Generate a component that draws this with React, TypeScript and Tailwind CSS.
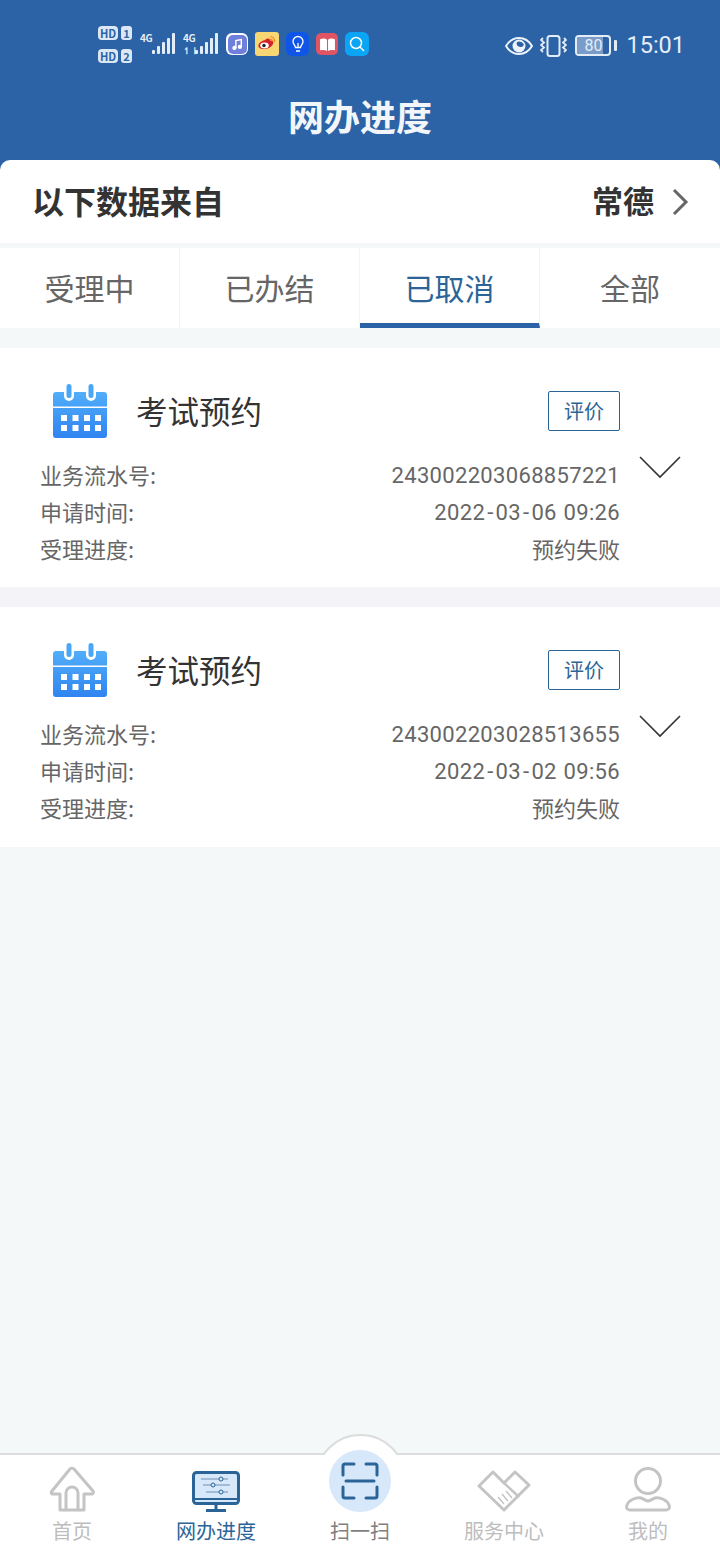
const font = { fontFamily: '"Noto Sans CJK SC", Roboto, sans-serif' }

const tabs = ['受理中', '已办结', '已取消', '全部']

const orders = [
  { no: '243002203068857221', time: '2022-03-06 09:26' },
  { no: '243002203028513655', time: '2022-03-02 09:56' },
]

function Bars() {
  return (
    <div className="mb-[2px] flex items-end gap-[2px]">
      {[4, 8, 12, 16, 21].map(h => (
        <div key={h} className="w-[3px] rounded-[1px] bg-[#e4edf7]" style={{ height: h }} />
      ))}
    </div>
  )
}

function HdBadge({ n }: { n: string }) {
  return (
    <div className="flex items-center gap-[3px]">
      <div className="flex h-[14px] w-[20px] items-center justify-center rounded-[4px] bg-[#dce7f4] text-[11px] leading-none font-bold text-[#2b63a6]">
        HD
      </div>
      <div className="flex h-[14px] w-[11px] items-center justify-center rounded-[3px] bg-[#dce7f4] text-[11px] leading-none font-bold text-[#2b63a6]">
        {n}
      </div>
    </div>
  )
}

function Signal({ arrows }: { arrows?: boolean }) {
  return (
    <div className="flex h-[24px] items-end">
      <div className="flex h-full w-[12px] flex-col justify-between text-[10px] leading-[11px] font-bold tracking-[-0.5px] text-[#e4edf7]">
        <span>4G</span>
        {arrows ? <span className="text-[9px] leading-[10px]">↿⇂</span> : <span />}
      </div>
      <Bars />
    </div>
  )
}

function AppIcons() {
  return (
    <div className="flex items-center gap-[7px]">
      <div className="flex h-[22px] w-[22px] items-center justify-center rounded-[6px] bg-white">
        <div className="flex h-[19px] w-[19px] items-center justify-center rounded-[5px] bg-[#6f80dc]">
          <svg width="13" height="13" viewBox="0 0 12 12" fill="none" stroke="#fff" strokeWidth="1.3">
            <path d="M4.5 9.2V2.4l5-1v6.6" />
            <circle cx="3.2" cy="9.2" r="1.3" fill="#fff" />
            <circle cx="8.2" cy="8.2" r="1.3" fill="#fff" />
          </svg>
        </div>
      </div>
      <div className="flex h-[24px] w-[24px] items-center justify-center rounded-[3px] bg-[#f7d774]">
        <svg width="22" height="20" viewBox="0 0 22 20" fill="none">
          <path d="M9 6c3-2.500 5-1.500 5 .5 3-.5 4 1.500 3 3.500-1.500 3-5 5-9 5S2 13.500 2.500 11 6 7 9 6z" fill="#d6232b" />
          <ellipse cx="8.500" cy="11.500" rx="4.300" ry="3" fill="#fff" />
          <circle cx="8" cy="11.500" r="1.700" fill="#222" />
          <path d="M14 2.500c3 0 5 2.500 4.500 5.500M14 5c1.500 0 2.500 1 2.200 2.500" stroke="#ec8a1e" strokeWidth="1.200" />
        </svg>
      </div>
      <div className="flex h-[24px] w-[23px] items-center justify-center rounded-[6px] bg-[#0f56e8]">
        <svg width="16" height="18" viewBox="0 0 16 18" fill="none" stroke="#fff" strokeWidth="1.300">
          <path d="M5.500 12.500c0-2-2.500-3-2.500-6a5 5 0 0 1 10 0c0 3-2.500 4-2.500 6z" />
          <path d="M6 16h4M8 12.500V8" />
        </svg>
      </div>
      <div className="flex h-[22px] w-[22px] items-center justify-center rounded-[5px] bg-[#df5564]">
        <svg width="17" height="15" viewBox="0 0 16 14" fill="#fff">
          <path d="M1 2c2.500-1 5-1 6.500.5V13C6 12 3.500 12 1 12.500zM15 2c-2.500-1-5-1-6.500.5V13c1.500-1 4-1 6.500-.5z" />
        </svg>
      </div>
      <div className="flex h-[24px] w-[24px] items-center justify-center rounded-[6px] bg-[#0aa5f5]">
        <svg width="18" height="18" viewBox="0 0 18 18" fill="none" stroke="#fff" strokeWidth="1.500">
          <circle cx="8" cy="8" r="5.500" />
          <path d="M12 12l4 4" />
        </svg>
      </div>
    </div>
  )
}

function StatusBar() {
  return (
    <div className="flex h-[91px] items-start pt-[24px] pr-[35px] pl-[98px]">
      <div className="flex flex-col gap-[9px] pt-[2px]">
        <HdBadge n="1" />
        <HdBadge n="2" />
      </div>
      <div className="mt-[8px] ml-[8px] flex items-center gap-[8px]">
        <Signal />
        <Signal arrows />
        <AppIcons />
      </div>
      <div className="ml-auto flex items-center pt-[10px] text-[#e4edf7]">
        <svg width="28" height="20" viewBox="0 0 28 20" fill="none">
          <path d="M1 10c3-5 8-8 13-8s10 3 13 8c-3 5-8 8-13 8S4 15 1 10z" fill="#2b63a6" stroke="#eef3fa" strokeWidth="2" />
          <circle cx="14" cy="10" r="6.500" fill="#eef3fa" />
          <path d="M12 6a6 6 0 0 1 7 2.500 3 3 0 0 1-7-2.500z" fill="#2b63a6" />
        </svg>
        <svg className="ml-[7px]" width="27" height="22" viewBox="0 0 27 22" fill="none" stroke="#e4edf7" strokeWidth="2">
          <rect x="7.500" y="1" width="12" height="20" rx="2.500" />
          <path d="M3 3l-2 2 3 2.500-3 2.500 3 2.500-3 2.500 2 2M24 3l2 2-3 2.500 3 2.500-3 2.500 3 2.500-2 2" strokeWidth="1.800" />
        </svg>
        <div className="ml-[8px] flex items-center gap-[3px]">
          <div className="relative flex h-[21px] w-[36px] items-center justify-center overflow-hidden rounded-[4px] border-2 border-[#e4edf7] bg-[#2b63a6] text-[16px] leading-none" style={{ fontFamily: 'Roboto, sans-serif' }}>
            <div className="absolute inset-y-0 left-0 w-[80%] bg-[#7a9cc8]" />
            <span className="relative">80</span>
          </div>
          <div className="h-[11px] w-[3px] rounded-[1px] bg-[#e4edf7]" />
        </div>
        <span className="ml-[9px] text-[23.500px] leading-none" style={{ fontFamily: 'Roboto, sans-serif' }}>15:01</span>
      </div>
    </div>
  )
}

function CalendarIcon() {
  return (
    <svg width="54" height="54" viewBox="0 0 54 54" fill="none">
      <defs>
        <linearGradient id="cal" x1="0" y1="0" x2="0" y2="1">
          <stop offset="0" stopColor="#52aefa" />
          <stop offset="1" stopColor="#2f84f0" />
        </linearGradient>
      </defs>
      <path d="M3 8h8v4a5 5 0 0 0 10 0V8h12v4a5 5 0 0 0 10 0V8h8a3 3 0 0 1 3 3v40a3 3 0 0 1-3 3H3a3 3 0 0 1-3-3V11a3 3 0 0 1 3-3z" fill="url(#cal)" />
      <rect x="13.500" y="0" width="5" height="14" rx="2.500" fill="#4aa7f8" />
      <rect x="35.500" y="0" width="5" height="14" rx="2.500" fill="#4aa7f8" />
      <rect x="0" y="22.500" width="54" height="1.500" fill="#fff" />
      {[8, 19.5, 31, 42].flatMap(x =>
        [31, 41].map(y => <rect key={`${x}-${y}`} x={x} y={y} width="6" height="6" fill="#fff" />),
      )}
    </svg>
  )
}

// The reference font draws wider hyphens than Roboto, so they get side margins
function Stamp({ text }: { text: string }) {
  const parts = text.split('-')
  return (
    <span className="translate-y-[1px] tracking-[0.33px] [word-spacing:1px]" style={{ fontFamily: 'Roboto, sans-serif' }}>
      {parts.map((p, i) => (
        <span key={i}>
          {i > 0 && <span className="mx-[2px]">-</span>}
          {p}
        </span>
      ))}
    </span>
  )
}

function OrderCard({ no, time }: { no: string; time: string }) {
  return (
    <div className="flex h-[239px] bg-white pl-[40px] last:h-[240px]">
      <div className="w-[580px] shrink-0">
        <div className="flex h-[108px] items-center pt-[18px]">
          <div className="ml-[13px]">
            <CalendarIcon />
          </div>
          <span className="ml-[29px] text-[31.500px] leading-none text-[#333]">考试预约</span>
          <div className="ml-auto flex h-[40px] w-[72px] items-center justify-center rounded-[2px] border border-[#2b6597] text-[20px] leading-none text-[#2b6597]">
            评价
          </div>
        </div>
        <div className="text-[22px] leading-[37px] text-[#666]">
          <div className="flex justify-between">
            <span>业务流水号:</span>
            <Stamp text={no} />
          </div>
          <div className="flex justify-between">
            <span>申请时间:</span>
            <Stamp text={time} />
          </div>
          <div className="flex justify-between">
            <span>受理进度:</span>
            <span>预约失败</span>
          </div>
        </div>
      </div>
      <svg className="mt-[107px] ml-[19px]" width="42" height="24" viewBox="0 0 42 24" fill="none" stroke="#333" strokeWidth="1.600">
        <path d="M1 2l20 20L41 2" />
      </svg>
    </div>
  )
}

function HomeIcon() {
  return (
    <svg width="48" height="46" viewBox="0 0 48 46" fill="none" stroke="#c4c4c4" strokeWidth="3" strokeLinejoin="round">
      <path d="M12 44V28H4c-1-1-1-2 0-3L22 3c1-1 3-1 4 0l19 22c1 1 0 3-1 3h-8v16z" />
      <path d="M18 44V27a6 6 0 0 1 12 0v17" />
    </svg>
  )
}

function ProgressIcon() {
  return (
    <svg width="48" height="41" viewBox="0 0 48 41" fill="none">
      <rect x="1.500" y="1.500" width="45" height="31" rx="3" fill="#d8e8fb" stroke="#2b6597" strokeWidth="3" />
      <path d="M2 28h44" stroke="#2b6597" strokeWidth="2" />
      <path d="M24 33v6M14 39.500h20" stroke="#2b6597" strokeWidth="3" />
      <path d="M9 8h27M11 14h27M14 21h22" stroke="#6d8fb5" strokeWidth="1" />
      <circle cx="29" cy="8" r="2" fill="#d8e8fb" stroke="#2b6597" />
      <circle cx="21" cy="14" r="2" fill="#d8e8fb" stroke="#2b6597" />
      <circle cx="29" cy="21" r="2" fill="#d8e8fb" stroke="#2b6597" />
    </svg>
  )
}

function ScanIcon() {
  return (
    <div className="flex h-[62px] w-[62px] items-center justify-center rounded-full bg-[#d8e8fb]">
      <svg width="38" height="38" viewBox="0 0 38 38" fill="none" stroke="#2b6597" strokeWidth="3" strokeLinecap="round">
        <path d="M13 2H4a2 2 0 0 0-2 2v9M25 2h9a2 2 0 0 1 2 2v9M13 36H4a2 2 0 0 1-2-2v-9M25 36h9a2 2 0 0 0 2-2v-9" />
        <path d="M5 19h28" />
      </svg>
    </div>
  )
}

function ServiceIcon() {
  return (
    <svg width="54" height="42" viewBox="0 0 54 42" fill="none" stroke="#c4c4c4" strokeWidth="3" strokeLinejoin="round">
      <path d="M16 2L2 16l25 24 25-25L38 2 27 13z" />
      <path d="M27 13l15 14" strokeWidth="2.500" />
      <path d="M21 27l6 7M25 24l6 7M29 21l6 7" strokeWidth="1.500" />
    </svg>
  )
}

function UserIcon() {
  return (
    <svg width="46" height="46" viewBox="0 0 46 46" fill="none" stroke="#c4c4c4" strokeWidth="3">
      <circle cx="23" cy="15" r="12.500" />
      <path d="M5 44h36c3 0 4-2 3-5-2-5-9-8-14-7-3 1-5 3-7 3s-4-2-7-3c-5-1-12 2-14 7-1 3 0 5 3 5z" strokeLinejoin="round" />
    </svg>
  )
}

const navItems = [
  { label: '首页', icon: <HomeIcon />, color: 'text-[#bdbdbd]' },
  { label: '网办进度', icon: <ProgressIcon />, color: 'text-[#2b6597]' },
  { label: '扫一扫', icon: <ScanIcon />, color: 'text-[#808080]' },
  { label: '服务中心', icon: <ServiceIcon />, color: 'text-[#bdbdbd]' },
  { label: '我的', icon: <UserIcon />, color: 'text-[#bdbdbd]' },
]

function BottomNav() {
  return (
    <div className="relative h-[107px] shrink-0 border-t-2 border-[#dcdedd] bg-white">
      {/* bump behind the scan button */}
      <div className="absolute top-[-21px] left-[314.500px] h-[91px] w-[91px] rounded-full border-2 border-[#dcdedd] bg-white [clip-path:inset(0_0_70px_0)]" />
      <div className="relative grid h-full grid-cols-5 text-[20px] leading-none">
        {navItems.map(item => (
          <div key={item.label} className={`flex flex-col items-center ${item.color}`}>
            <div className="flex h-[57px] items-end">{item.icon}</div>
            <span className="mt-[9px]">{item.label}</span>
          </div>
        ))}
      </div>
    </div>
  )
}

export default function App() {
  return (
    <div className="flex h-[1560px] w-[720px] flex-col overflow-hidden bg-[#f4f8f9]" style={font}>
      <div className="h-[172px] shrink-0 bg-[#2b63a6]">
        <StatusBar />
        <div className="text-center text-[36px] leading-[48px] font-bold text-[#f2f6fb]">网办进度</div>
      </div>

      <div className="mt-[-12px] flex h-[83px] shrink-0 items-center justify-between rounded-t-[10px] bg-white pr-[31px] pb-[4px] pl-[32px]">
        <span className="text-[32px] leading-none font-bold text-[#333]">以下数据来自</span>
        <div className="flex items-center gap-[17px]">
          <span className="text-[31px] leading-none font-bold text-[#333]">常德</span>
          <svg className="mt-[4px]" width="18" height="28" viewBox="0 0 18 28" fill="none" stroke="#666" strokeWidth="3">
            <path d="M3 2l12 12L3 26" />
          </svg>
        </div>
      </div>

      <div className="mt-[5px] grid h-[80px] shrink-0 grid-cols-4 bg-white">
        {tabs.map((t, i) => (
          <div
            key={t}
            className={`flex items-center justify-center border-r border-[#f3f5f5] pb-[2px] text-[30px] leading-none last:border-r-0 ${
              i === 2 ? 'border-b-[5px] border-b-[#2b63a6] pt-[5px] pb-0 text-[#2b6597]' : 'text-[#666]'
            }`}
          >
            {t}
          </div>
        ))}
      </div>

      <div className="mt-[20px] flex flex-col gap-[20px] bg-[#f4f4f8]">
        {orders.map(o => (
          <OrderCard key={o.no} no={o.no} time={o.time} />
        ))}
      </div>

      <div className="flex-1" />
      <BottomNav />
    </div>
  )
}
